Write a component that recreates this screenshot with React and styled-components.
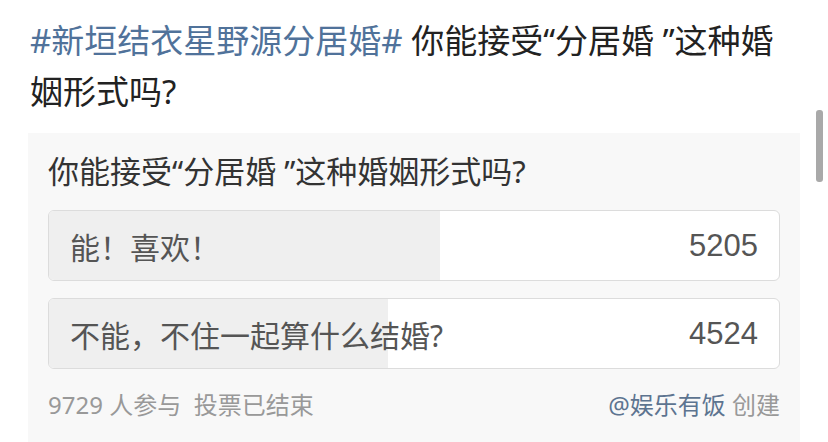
import React from 'react';
import styled, { createGlobalStyle } from 'styled-components';

// latin font first so the quotes, # and ? come out narrow, as in the screenshot
const GlobalStyle = createGlobalStyle`
  html, body {
    margin: 0;
    padding: 0;
    background: #ffffff;
  }
  body {
    font-family: "Noto Sans", "Noto Sans CJK SC", sans-serif;
  }
`;

const poll = {
  question: '你能接受“分居婚 ”这种婚姻形式吗?',
  options: [
    { label: '能！喜欢！', votes: 5205 },
    { label: '不能，不住一起算什么结婚?', votes: 4524 },
  ],
  status: '投票已结束',
  creator: '@娱乐有饭',
};

const App = () => {
  const total = poll.options.reduce((sum, o) => sum + o.votes, 0);

  return (
    <>
      <GlobalStyle />
      <Page>
        <Title>
          <Topic>#新垣结衣星野源分居婚#</Topic> {poll.question}
        </Title>

        <Panel>
          <Question>{poll.question}</Question>

          <Options>
            {poll.options.map((o) => (
              <Option key={o.label}>
                <Fill style={{ width: `${(o.votes / total) * 100}%` }} />
                <OptionLabel>{o.label}</OptionLabel>
                <Votes>{o.votes}</Votes>
              </Option>
            ))}
          </Options>

          <Footer>
            <span>
              {total} 人参与&nbsp;&nbsp;{poll.status}
            </span>
            <span>
              <Creator>{poll.creator}</Creator> 创建
            </span>
          </Footer>
        </Panel>

        <Scrollbar />
      </Page>
    </>
  );
};

const Page = styled.div`
  position: relative;
  width: 828px;
  height: 442px;
  overflow: hidden;
  padding: 15px 28px 0 28px;
  box-sizing: border-box;
`;

const Title = styled.h1`
  margin: 0 14px 16px 2px;
  font-size: 33px;
  line-height: 51px;
  font-weight: 400;
  color: #222222;
`;

const Topic = styled.span`
  color: #50729a;
`;

const Panel = styled.div`
  width: 772px;
  height: 320px;
  background: #f8f8f8;
  padding: 18px 20px 0 20px;
  box-sizing: border-box;
`;

const Question = styled.div`
  font-size: 31px;
  line-height: 40px;
  color: #333333;
  margin-bottom: 19px;
`;

const Options = styled.div`
  display: flex;
  flex-direction: column;
  gap: 17px;
`;

const Option = styled.div`
  position: relative;
  display: flex;
  align-items: center;
  justify-content: space-between;
  height: 71px;
  padding: 0 21px 0 21px;
  box-sizing: border-box;
  background: #ffffff;
  border: 1px solid #dcdcdc;
  border-radius: 6px;
  overflow: hidden;
`;

const Fill = styled.div`
  position: absolute;
  left: 0;
  top: 0;
  bottom: 0;
  background: #efefef;
`;

const OptionLabel = styled.span`
  position: relative;
  font-size: 30px;
  color: #555555;
`;

const Votes = styled.span`
  position: relative;
  font-family: "Liberation Sans", Arial, sans-serif;
  font-size: 31px;
  color: #555555;
`;

const Footer = styled.div`
  display: flex;
  justify-content: space-between;
  align-items: center;
  margin-top: 21px;
  font-size: 24px;
  line-height: 30px;
  color: #999999;
`;

const Creator = styled.span`
  color: #5d7490;
`;

const Scrollbar = styled.div`
  position: absolute;
  left: 816px;
  top: 110px;
  width: 7px;
  height: 72px;
  border-radius: 3px;
  background: #a9a9a9;
`;

export default App;
